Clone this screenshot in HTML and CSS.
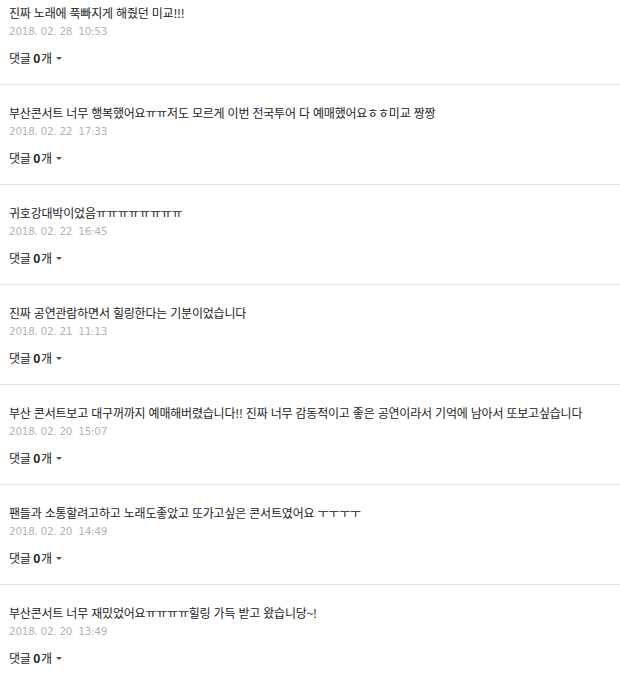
FILE: index.html
```html
<!DOCTYPE html>
<html lang="ko">
<head>
  <meta charset="UTF-8" />
  <meta name="viewport" content="width=device-width, initial-scale=1.0"/>
  <title>댓글</title>
  <link rel="stylesheet" href="styles.css">
</head>
<body>

  <ul class="comment-list">
    <li class="comment">
      <p class="comment-text">진짜 노래에 푹빠지게 해줬던 미교!!!</p>
      <span class="comment-date">2018. 02. 28&nbsp; 10:53</span>
      <a class="reply-toggle">댓글 <b>0</b>개 <i class="caret"></i></a>
    </li>
    <li class="comment">
      <p class="comment-text">부산콘서트 너무 행복했어요ㅠㅠ저도 모르게 이번 전국투어 다 예매했어요ㅎㅎ미교 짱짱</p>
      <span class="comment-date">2018. 02. 22&nbsp; 17:33</span>
      <a class="reply-toggle">댓글 <b>0</b>개 <i class="caret"></i></a>
    </li>
    <li class="comment">
      <p class="comment-text">귀호강대박이었음ㅠㅠㅠㅠㅠㅠㅠㅠ</p>
      <span class="comment-date">2018. 02. 22&nbsp; 16:45</span>
      <a class="reply-toggle">댓글 <b>0</b>개 <i class="caret"></i></a>
    </li>
    <li class="comment">
      <p class="comment-text">진짜 공연관람하면서 힐링한다는 기분이었습니다</p>
      <span class="comment-date">2018. 02. 21&nbsp; 11:13</span>
      <a class="reply-toggle">댓글 <b>0</b>개 <i class="caret"></i></a>
    </li>
    <li class="comment">
      <p class="comment-text">부산 콘서트보고 대구꺼까지 예매해버렸습니다!! 진짜 너무 감동적이고 좋은 공연이라서 기억에 남아서 또보고싶습니다</p>
      <span class="comment-date">2018. 02. 20&nbsp; 15:07</span>
      <a class="reply-toggle">댓글 <b>0</b>개 <i class="caret"></i></a>
    </li>
    <li class="comment">
      <p class="comment-text">팬들과 소통할려고하고 노래도좋았고 또가고싶은 콘서트였어요 ㅜㅜㅜㅜ</p>
      <span class="comment-date">2018. 02. 20&nbsp; 14:49</span>
      <a class="reply-toggle">댓글 <b>0</b>개 <i class="caret"></i></a>
    </li>
    <li class="comment">
      <p class="comment-text">부산콘서트 너무 재밌었어요ㅠㅠㅠㅠ힐링 가득 받고 왔습니당~!</p>
      <span class="comment-date">2018. 02. 20&nbsp; 13:49</span>
      <a class="reply-toggle">댓글 <b>0</b>개 <i class="caret"></i></a>
    </li>
  </ul>

</body>
</html>
```

FILE: styles.css
```css
body {
  font-family: "Noto Sans CJK KR", "Noto Sans", sans-serif;
  background: #fff;
  color: #222;
  margin: 0;
  padding: 0;
}
.comment-list {
  list-style: none;
  margin: 0;
  padding: 0;
}
.comment {
  display: flex;
  flex-direction: column;
  align-items: flex-start;
  height: 80px;
  padding: 19px 9px 0;
  border-bottom: 1px solid #e3e3e3;
}
.comment:first-child {
  padding-top: 4px;
}
.comment:last-child {
  border-bottom: none;
}
.comment-text {
  margin: 0;
  font-size: 12px;
  line-height: 18px;
  letter-spacing: -0.2px;
  color: #222;
  white-space: nowrap;
}
.comment-date {
  display: block;
  font-family: "DejaVu Sans", sans-serif;
  font-size: 10.5px;
  line-height: 18px;
  color: #b3b3b3;
  letter-spacing: -0.3px;
}
.reply-toggle {
  display: flex;
  align-items: center;
  margin-top: 9px;
  font-size: 12px;
  line-height: 18px;
  letter-spacing: -0.4px;
  color: #222;
  cursor: pointer;
}
.reply-toggle b {
  font-weight: bold;
  margin: 0 1px 0 3px;
}
.caret {
  display: inline-block;
  margin-left: 4px;
  width: 0;
  height: 0;
  border-left: 3px solid transparent;
  border-right: 3px solid transparent;
  border-top: 3px solid #555;
}
```
